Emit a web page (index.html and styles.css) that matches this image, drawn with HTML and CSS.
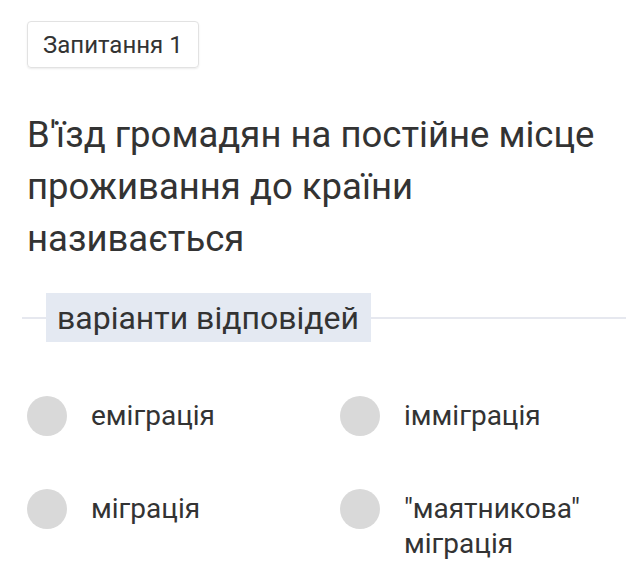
FILE: index.html
```html
<!DOCTYPE html>
<html lang="uk">
<head>
<meta charset="utf-8">
<link rel="stylesheet" href="styles.css">
</head>
<body>
<main class="page">
  <div class="badge">Запитання 1</div>
  <h1 class="question">В'їзд громадян на постійне місце проживання до країни називається</h1>
  <div class="section">
    <span class="section-label">варіанти відповідей</span>
  </div>
  <div class="options">
    <div class="option"><span class="radio"></span><span class="option-text">еміграція</span></div>
    <div class="option"><span class="radio"></span><span class="option-text">імміграція</span></div>
    <div class="option"><span class="radio"></span><span class="option-text">міграція</span></div>
    <div class="option"><span class="radio"></span><span class="option-text">"маятникова" міграція</span></div>
  </div>
</main>
</body>
</html>
```

FILE: styles.css
```css
html, body {
  margin: 0;
  padding: 0;
  background: #ffffff;
}
body {
  font-family: Roboto, "Noto Sans", sans-serif;
  color: #333333;
}
.page {
  padding: 21px 15px 0 27px;
  display: flex;
  flex-direction: column;
  align-items: flex-start;
}
.badge {
  box-sizing: border-box;
  height: 47px;
  padding: 0 15px;
  display: flex;
  align-items: center;
  font-size: 24px;
  border: 1px solid #e2e2e2;
  border-radius: 4px;
  box-shadow: 0 1px 2px rgba(0,0,0,0.08);
  color: #333;
}
.question {
  margin: 41px 0 0 0;
  font-size: 36.5px;
  font-weight: 400;
  line-height: 52px;
  color: #333;
}
.section {
  margin: 28px 0 0 -5px;
  align-self: stretch;
  display: flex;
  align-items: center;
}
.section::before,
.section::after {
  content: "";
  height: 2px;
  background: #e6e8ef;
}
.section::before {
  width: 24px;
}
.section::after {
  flex: 1;
}
.section-label {
  background: #e4e9f2;
  padding: 0 12px 0 11px;
  height: 49px;
  display: flex;
  align-items: center;
  font-size: 32px;
  color: #333;
}
.options {
  margin-top: 54px;
  display: grid;
  grid-template-columns: 313px 1fr;
  row-gap: 53px;
  align-self: stretch;
}
.option {
  display: flex;
  align-items: flex-start;
  gap: 24px;
}
.radio {
  flex: none;
  width: 40px;
  height: 40px;
  border-radius: 50%;
  background: #d9d9d9;
}
.option-text {
  margin-top: 2px;
  font-size: 28px;
  line-height: 35px;
}
```
